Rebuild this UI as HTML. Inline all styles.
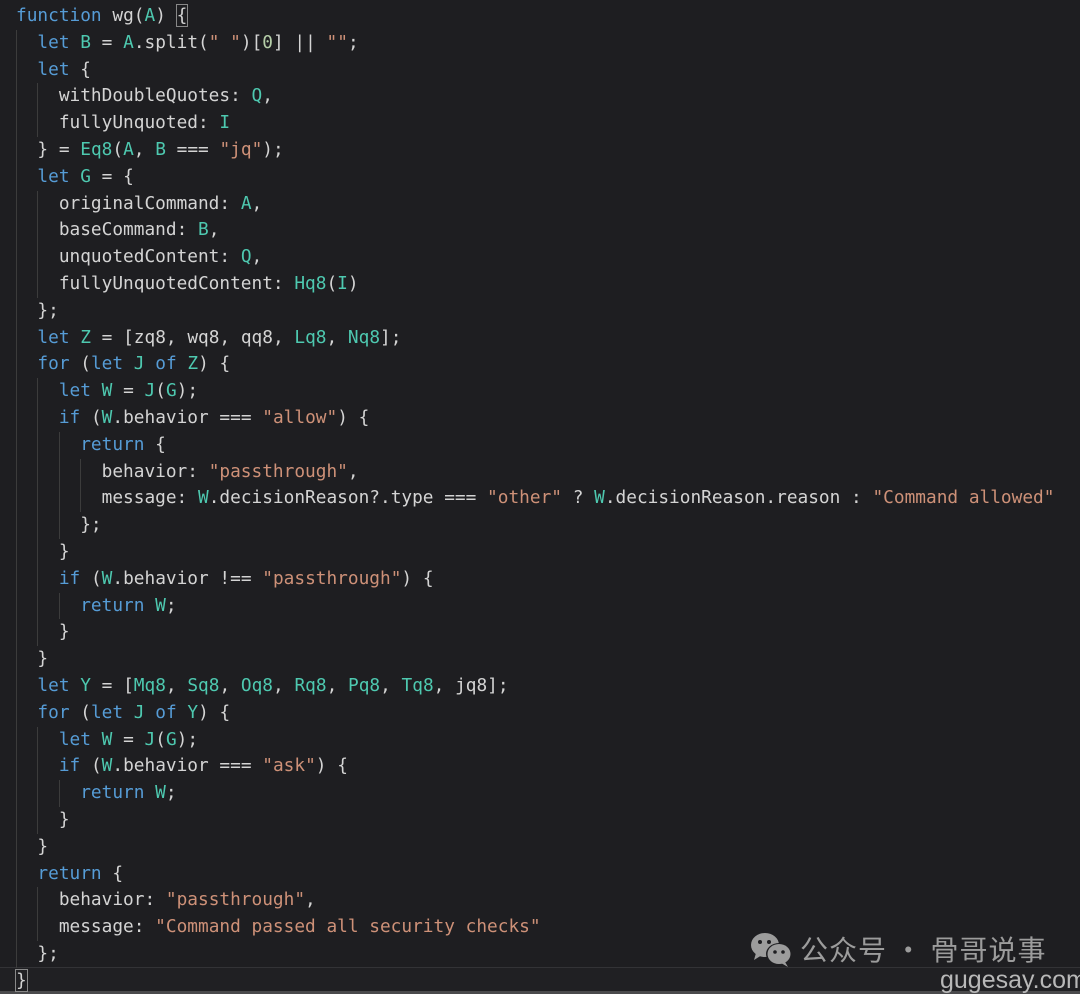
<!DOCTYPE html>
<html><head><meta charset="utf-8"><style>
html,body{margin:0;padding:0;background:#1e1e21;width:1080px;height:994px;overflow:hidden;}
#code{position:absolute;left:16px;top:3px;font-family:"DejaVu Sans Mono","Liberation Mono",monospace;font-size:17.8px;line-height:26.8px;color:#d4d4d4;}
.l{height:26.8px;white-space:pre;}
.i{display:inline-block;width:2ch;height:26.8px;vertical-align:top;box-shadow:inset 1px 0 0 #3c3c3c;}
.k{color:#569cd6}.t{color:#4ec9b0}.s{color:#ce9178}.n{color:#b5cea8}
.cur{position:absolute;left:0;top:967px;width:1080px;height:24px;background:#202023;border-top:1px solid #333336;}
.bot{position:absolute;left:0;top:991px;width:1080px;height:3px;background:#4a4a4c;}
.bx{outline:1px solid #888;}
.wm{position:absolute;left:800px;top:929px;font-family:"Noto Sans CJK SC",sans-serif;font-size:28px;line-height:40px;color:#9c9c9c;letter-spacing:1px;white-space:nowrap;}
.wm2{position:absolute;left:940px;top:966px;font-family:"Liberation Sans",sans-serif;font-size:25px;line-height:28px;color:#b8b8b8;white-space:nowrap;}
</style></head><body>
<div class="cur"></div><div class="bot"></div>
<div id="code"><div class="l"><span class="k">function</span> wg(<span class="t">A</span>) <span class="bx">{</span></div><div class="l"><span class="i"></span><span class="k">let</span> <span class="t">B</span> = <span class="t">A</span>.split(<span class="s">" "</span>)[<span class="n">0</span>] || <span class="s">""</span>;</div><div class="l"><span class="i"></span><span class="k">let</span> {</div><div class="l"><span class="i"></span><span class="i"></span>withDoubleQuotes: <span class="t">Q</span>,</div><div class="l"><span class="i"></span><span class="i"></span>fullyUnquoted: <span class="t">I</span></div><div class="l"><span class="i"></span>} = <span class="t">Eq8</span>(<span class="t">A</span>, <span class="t">B</span> === <span class="s">"jq"</span>);</div><div class="l"><span class="i"></span><span class="k">let</span> <span class="t">G</span> = {</div><div class="l"><span class="i"></span><span class="i"></span>originalCommand: <span class="t">A</span>,</div><div class="l"><span class="i"></span><span class="i"></span>baseCommand: <span class="t">B</span>,</div><div class="l"><span class="i"></span><span class="i"></span>unquotedContent: <span class="t">Q</span>,</div><div class="l"><span class="i"></span><span class="i"></span>fullyUnquotedContent: <span class="t">Hq8</span>(<span class="t">I</span>)</div><div class="l"><span class="i"></span>};</div><div class="l"><span class="i"></span><span class="k">let</span> <span class="t">Z</span> = [zq8, wq8, qq8, <span class="t">Lq8</span>, <span class="t">Nq8</span>];</div><div class="l"><span class="i"></span><span class="k">for</span> (<span class="k">let</span> <span class="t">J</span> <span class="k">of</span> <span class="t">Z</span>) {</div><div class="l"><span class="i"></span><span class="i"></span><span class="k">let</span> <span class="t">W</span> = <span class="t">J</span>(<span class="t">G</span>);</div><div class="l"><span class="i"></span><span class="i"></span><span class="k">if</span> (<span class="t">W</span>.behavior === <span class="s">"allow"</span>) {</div><div class="l"><span class="i"></span><span class="i"></span><span class="i"></span><span class="k">return</span> {</div><div class="l"><span class="i"></span><span class="i"></span><span class="i"></span><span class="i"></span>behavior: <span class="s">"passthrough"</span>,</div><div class="l"><span class="i"></span><span class="i"></span><span class="i"></span><span class="i"></span>message: <span class="t">W</span>.decisionReason?.type === <span class="s">"other"</span> ? <span class="t">W</span>.decisionReason.reason : <span class="s">"Command allowed"</span></div><div class="l"><span class="i"></span><span class="i"></span><span class="i"></span>};</div><div class="l"><span class="i"></span><span class="i"></span>}</div><div class="l"><span class="i"></span><span class="i"></span><span class="k">if</span> (<span class="t">W</span>.behavior !== <span class="s">"passthrough"</span>) {</div><div class="l"><span class="i"></span><span class="i"></span><span class="i"></span><span class="k">return</span> <span class="t">W</span>;</div><div class="l"><span class="i"></span><span class="i"></span>}</div><div class="l"><span class="i"></span>}</div><div class="l"><span class="i"></span><span class="k">let</span> <span class="t">Y</span> = [<span class="t">Mq8</span>, <span class="t">Sq8</span>, <span class="t">Oq8</span>, <span class="t">Rq8</span>, <span class="t">Pq8</span>, <span class="t">Tq8</span>, jq8];</div><div class="l"><span class="i"></span><span class="k">for</span> (<span class="k">let</span> <span class="t">J</span> <span class="k">of</span> <span class="t">Y</span>) {</div><div class="l"><span class="i"></span><span class="i"></span><span class="k">let</span> <span class="t">W</span> = <span class="t">J</span>(<span class="t">G</span>);</div><div class="l"><span class="i"></span><span class="i"></span><span class="k">if</span> (<span class="t">W</span>.behavior === <span class="s">"ask"</span>) {</div><div class="l"><span class="i"></span><span class="i"></span><span class="i"></span><span class="k">return</span> <span class="t">W</span>;</div><div class="l"><span class="i"></span><span class="i"></span>}</div><div class="l"><span class="i"></span>}</div><div class="l"><span class="i"></span><span class="k">return</span> {</div><div class="l"><span class="i"></span><span class="i"></span>behavior: <span class="s">"passthrough"</span>,</div><div class="l"><span class="i"></span><span class="i"></span>message: <span class="s">"Command passed all security checks"</span></div><div class="l"><span class="i"></span>};</div><div class="l"><span class="bx">}</span></div></div>
<svg style="position:absolute;left:750px;top:932px" width="44" height="36" viewBox="0 0 44 36">
<ellipse cx="15" cy="13" rx="14" ry="12" fill="#9c9c9c"/><path d="M6 21 L4 28 L12 23Z" fill="#9c9c9c"/>
<ellipse cx="29" cy="22" rx="13" ry="11" fill="#1e1e21"/>
<ellipse cx="29" cy="22" rx="11.5" ry="10" fill="#9c9c9c"/><path d="M35 30 L38 35 L31 31Z" fill="#9c9c9c"/>
<circle cx="10" cy="10" r="2" fill="#1e1e21"/><circle cx="19" cy="10" r="2" fill="#1e1e21"/>
<circle cx="25" cy="20" r="1.8" fill="#1e1e21"/><circle cx="33" cy="20" r="1.8" fill="#1e1e21"/>
</svg>
<div class="wm">公众号 · 骨哥说事</div>
<div class="wm2">gugesay.com</div>
</body></html>
